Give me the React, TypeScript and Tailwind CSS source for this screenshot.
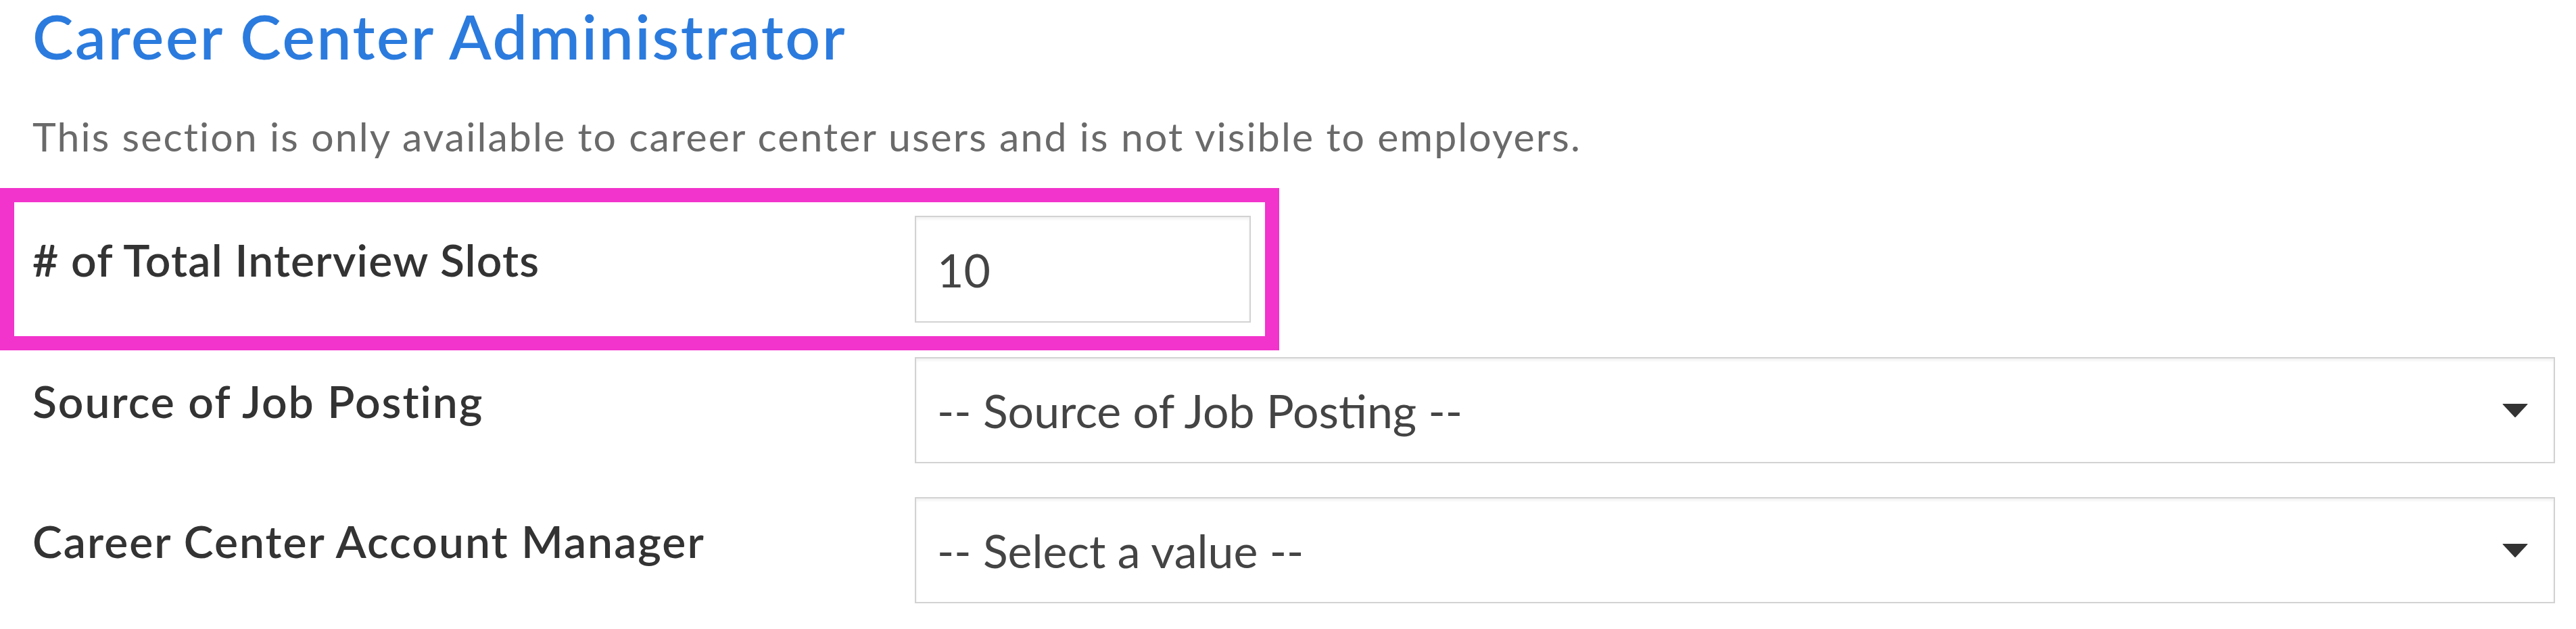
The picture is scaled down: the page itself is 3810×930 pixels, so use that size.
function Caret() {
  return (
    <svg width="38" height="20" viewBox="0 0 38 20" className="shrink-0">
      <path d="M1 0 H37 Q38 0 37.2 1 L20 19.5 Q19 20.5 18 19.5 L0.8 1 Q0 0 1 0 Z" fill="#333333" />
    </svg>
  );
}

function SelectBox({ value }: { value: string }) {
  return (
    <div className="flex h-[157px] w-[2426px] items-center justify-between border-2 border-[#d2d2d2] bg-white pl-[31px] pr-[38px] shadow-[inset_0_3px_4px_rgba(0,0,0,0.06)]">
      <span className="text-[68px] leading-none text-[#444444]">{value}</span>
      <Caret />
    </div>
  );
}

export default function App() {
  return (
    <div className="min-h-[930px] bg-white font-['Lato',sans-serif]">
      <div className="pl-[48px] pt-[7px]">
        <h2 className="text-[91px] font-semibold leading-none tracking-[2.6px] text-[#2b7bde]">
          Career Center Administrator
        </h2>
        <p className="mt-[74px] text-[59px] leading-none tracking-[2.1px] text-[#6a6a6a]">
          This section is only available to career center users and is not visible to employers.
        </p>
      </div>

      {/* highlighted row */}
      <div className="mt-[47px] flex w-[1892px] border-[21px] border-[#f233cc] py-[20px] pr-[21px] pl-[27px]">
        <label className="w-[1305px] shrink-0 pt-[32px] text-[66px] font-semibold leading-none tracking-[1.2px] text-[#333333]">
          # of Total Interview Slots
        </label>
        <input
          defaultValue="10"
          className="h-[158px] w-[497px] border-2 border-[#d2d2d2] bg-white pl-[31px] text-[68px] leading-none text-[#444444] shadow-[inset_0_3px_4px_rgba(0,0,0,0.06)] outline-none"
        />
      </div>

      <div className="mt-[10px] flex pl-[48px]">
        <label className="w-[1305px] shrink-0 pt-[32px] text-[66px] font-semibold leading-none tracking-[2px] text-[#333333]">
          Source of Job Posting
        </label>
        <SelectBox value="-- Source of Job Posting --" />
      </div>

      <div className="mt-[50px] flex pl-[48px]">
        <label className="w-[1305px] shrink-0 pt-[32px] text-[66px] font-semibold leading-none tracking-[2px] text-[#333333]">
          Career Center Account Manager
        </label>
        <SelectBox value="-- Select a value --" />
      </div>
    </div>
  );
}
